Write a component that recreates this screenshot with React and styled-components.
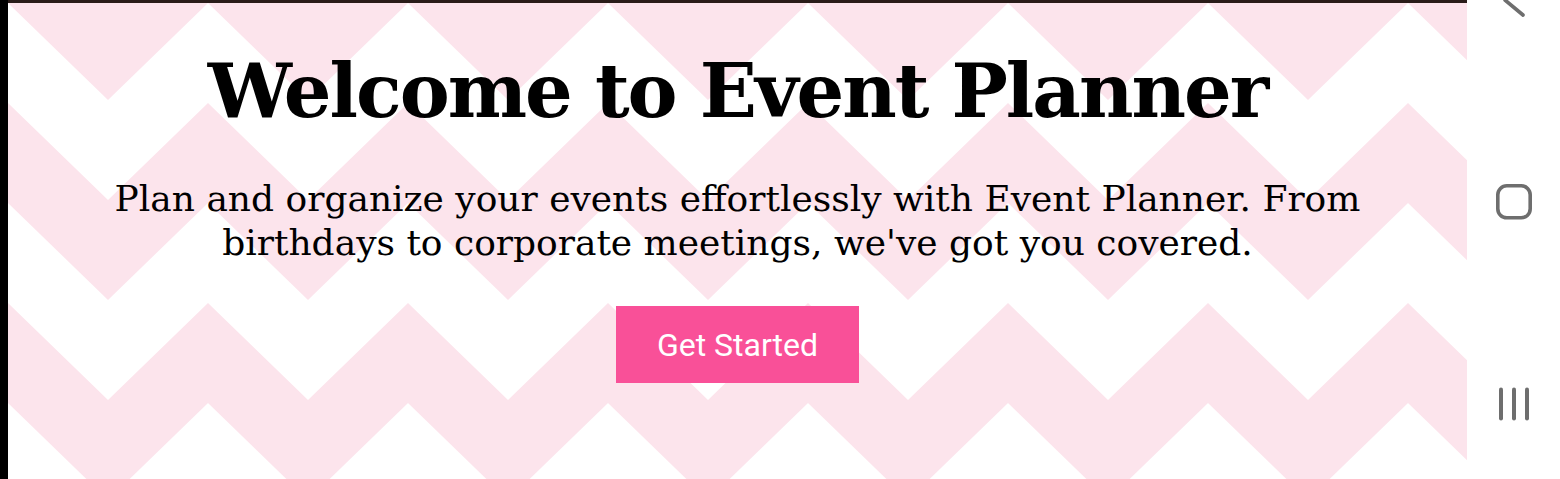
import React from 'react';
import styled, { createGlobalStyle } from 'styled-components';

const GlobalStyle = createGlobalStyle`
    html, body {
        margin: 0;
        padding: 0;
        background: #ffffff;
        overflow: hidden;
    }
`;

const ChevronBackdrop = () => (
    <Backdrop aria-hidden="true">
        <defs>
            <pattern id="chevron" x="0" y="-3" width="200" height="200" patternUnits="userSpaceOnUse">
                <polygon points="0,0 200,0 200,3 100,100 0,3" fill="#fce4ec" />
                <polygon points="0,103 100,200 200,103 200,200 0,200" fill="#fce4ec" />
            </pattern>
        </defs>
        <rect width="100%" height="100%" fill="url(#chevron)" />
    </Backdrop>
);

const BackIcon = () => (
    <svg width="36" height="36" viewBox="0 0 36 36">
        <path d="M27 3 L9 18 L27 33" fill="none" stroke="#6e6e6e" strokeWidth="3.6" strokeLinecap="round" strokeLinejoin="round" />
    </svg>
);

const HomeIcon = () => (
    <svg width="36" height="36" viewBox="0 0 36 36">
        <rect x="1.8" y="1.8" width="32.4" height="32" rx="9" fill="none" stroke="#6e6e6e" strokeWidth="3.6" />
    </svg>
);

const RecentsIcon = () => (
    <svg width="36" height="36" viewBox="0 0 36 36">
        <g stroke="#6e6e6e" strokeWidth="4" strokeLinecap="round">
            <line x1="5" y1="3.5" x2="5" y2="32.5" />
            <line x1="18" y1="3.5" x2="18" y2="32.5" />
            <line x1="31" y1="3.5" x2="31" y2="32.5" />
        </g>
    </svg>
);

const App = () => {
    return (
        <Device>
            <GlobalStyle />
            <Bezel />
            <Screen>
                <StatusStrip />
                <Stage>
                    <ChevronBackdrop />
                    <Hero>
                        <Title>Welcome to Event Planner</Title>
                        <Lead>
                            Plan and organize your events effortlessly with Event Planner. From
                            birthdays to corporate meetings, we've got you covered.
                        </Lead>
                        <StartButton type="button">Get Started</StartButton>
                    </Hero>
                </Stage>
            </Screen>
            <NavBar>
                <NavButton aria-label="Back"><BackIcon /></NavButton>
                <NavButton aria-label="Home"><HomeIcon /></NavButton>
                <NavButton aria-label="Recent apps"><RecentsIcon /></NavButton>
            </NavBar>
        </Device>
    );
};


const Device = styled.div`
    display: flex;
    width: 1560px;
    height: 479px;
    overflow: hidden;
    background: #ffffff;
`;

const Bezel = styled.div`
    width: 8px;
    flex-shrink: 0;
    background: #000000;
`;

const Screen = styled.main`
    flex: 1;
    display: flex;
    flex-direction: column;
    min-width: 0;
`;

const StatusStrip = styled.div`
    height: 3px;
    flex-shrink: 0;
    background: #2a1c19;
`;

const Stage = styled.section`
    position: relative;
    flex: 1;
    overflow: hidden;
    background: #ffffff;
`;

const Backdrop = styled.svg`
    position: absolute;
    inset: 0;
    width: 100%;
    height: 100%;
`;

const Hero = styled.div`
    position: relative;
    display: flex;
    flex-direction: column;
    align-items: center;
    gap: 41px;
    padding-top: 43px;
    text-align: center;
`;

const Title = styled.h1`
    margin: 0;
    font-family: "DejaVu Serif", "Liberation Serif", serif;
    font-weight: bold;
    font-size: 75px;
    letter-spacing: -2px;
    line-height: 1.2;
    color: #000000;
`;

const Lead = styled.p`
    margin: 0;
    max-width: 1320px;
    font-family: "DejaVu Serif", "Liberation Serif", serif;
    font-size: 36px;
    line-height: 44px;
    color: #000000;
`;

const StartButton = styled.button`
    height: 77px;
    padding: 0 41px;
    border: none;
    border-radius: 0;
    background: #f95098;
    color: #ffffff;
    font-family: Roboto, "Noto Sans", sans-serif;
    font-size: 32px;
    cursor: pointer;
`;

const NavBar = styled.nav`
    width: 93px;
    flex-shrink: 0;
    display: flex;
    flex-direction: column;
    align-items: center;
    margin-top: -101px;
    background: #ffffff;
`;

const NavButton = styled.div`
    height: 202px;
    display: flex;
    align-items: center;
    justify-content: center;
    flex-shrink: 0;
`;


export default App;
